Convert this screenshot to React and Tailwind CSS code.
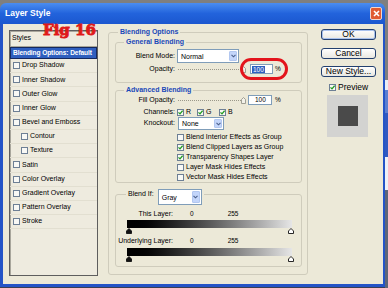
import React from "react"

const STYLES = [
  ["Drop Shadow"],
  ["Inner Shadow"],
  ["Outer Glow"],
  ["Inner Glow"],
  ["Bevel and Emboss"],
  ["Contour", true],
  ["Texture", true],
  ["Satin"],
  ["Color Overlay"],
  ["Gradient Overlay"],
  ["Pattern Overlay"],
  ["Stroke"],
]

const OPTIONS = [
  ["Blend Interior Effects as Group", false],
  ["Blend Clipped Layers as Group", true],
  ["Transparency Shapes Layer", true],
  ["Layer Mask Hides Effects", false],
  ["Vector Mask Hides Effects", false],
]

// small xp checkbox
function Box({ on }) {
  return (
    <span className="flex h-[7px] w-[7px] shrink-0 items-center justify-center border border-[#6d7f95] bg-[#f8f8f5]">
      {on && (
        <svg width="5" height="5" viewBox="0 0 5 5">
          <path d="M0.5 2.4 L2 3.9 L4.6 0.7" fill="none" stroke="#1f9a1f" strokeWidth="1.3" />
        </svg>
      )}
    </span>
  )
}

function Drop({ value, className }) {
  return (
    <div className={`flex items-stretch border border-[#7f9db9] bg-white ${className}`}>
      <span className="flex flex-1 items-center pl-[3px] text-[7px] leading-none">{value}</span>
      <span className="m-px flex w-[8px] items-center justify-center rounded-[1px] border border-[#b2c7f0] bg-[#c3d5fa]">
        <svg width="5" height="4" viewBox="0 0 5 4">
          <path d="M0.5 0.8 L2.5 2.8 L4.5 0.8" fill="none" stroke="#4a5f8a" strokeWidth="1.1" />
        </svg>
      </span>
    </div>
  )
}

function Slider() {
  return (
    <div className="flex w-[68px] items-center">
      <div className="h-0 flex-1 border-t border-dotted border-[#9a988a]" />
      <svg width="5" height="7" viewBox="0 0 5 7">
        <path d="M0.5 2.5 L2.5 0.5 L4.5 2.5 V6.5 H0.5Z" fill="#f3f2ea" stroke="#8b8a80" strokeWidth="0.8" />
      </svg>
    </div>
  )
}

function Thumb({ dark }) {
  return (
    <svg width="6" height="6" viewBox="0 0 6 6">
      <path d="M3 0.5 L5.5 3 V5.5 H0.5 V3Z" fill={dark ? "#111" : "#fff"} stroke="#111" strokeWidth="0.9" />
    </svg>
  )
}

function Btn({ children, def }) {
  return (
    <div
      className={`flex h-[11px] w-[55px] items-center justify-center rounded-[3px] border border-[#23406f] bg-linear-to-b from-white to-[#e9e8e1] text-[8.5px] leading-none ${
        def ? "shadow-[inset_0_0_0_1px_#a9c2ee]" : ""
      }`}
    >
      {children}
    </div>
  )
}

export default function App() {
  return (
    <div className="relative flex h-[288px] w-[388px] overflow-hidden bg-[#7f7f7f] font-['Liberation_Sans',Arial,sans-serif] text-black">
      {/* WINDOW */}
      <div className="flex w-[385px] flex-col pt-[3px]">
        {/* TITLE BAR */}
        <div className="flex h-[21px] items-center justify-between rounded-t-[6px] bg-linear-to-b from-[#4b8df0] via-[#2263dc] to-[#1b57cf] pl-[5px] pr-[3px]">
          <span className="text-[8.5px] font-bold text-white">Layer Style</span>
          <span className="flex h-[13px] w-[12px] items-center justify-center rounded-[2px] border border-[#f2d6cc] bg-[#e05a31]">
            <svg width="7" height="7" viewBox="0 0 7 7">
              <path d="M1 1 L6 6 M6 1 L1 6" stroke="white" strokeWidth="1.6" />
            </svg>
          </span>
        </div>

        {/* BODY */}
        <div className="flex h-[263px] border-b-[3px] border-l-[3px] border-r-[2px] border-[#2454c7]">
          <div className="flex flex-1 items-start bg-[#ece9d8] pl-[6px]">
            {/* STYLES LIST */}
            <div className="mt-[6px] flex h-[246px] w-[89px] flex-col border border-[#5e5e5e] bg-[#eeebdf] shadow-[inset_1px_1px_0_#a8a69c]">
              <div className="flex h-[16px] items-center border-b border-[#a9a698] pl-[2px] text-[7px]">Styles</div>
              <div className="flex h-[12px] items-center overflow-hidden whitespace-nowrap border border-[#15285e] bg-[#2f5fbf] pl-[2px] text-[6.6px] font-bold tracking-[-0.1px] text-white">
                Blending Options: Default
              </div>
              {STYLES.map(([name, sub]) => (
                <div
                  key={name}
                  className={`flex h-[14.2px] items-center gap-[2px] border-b border-[#e2dfd1] text-[7px] ${sub ? "pl-[11px]" : "pl-[3px]"}`}
                >
                  <Box />
                  <span>{name}</span>
                </div>
              ))}
            </div>

            {/* BLENDING OPTIONS */}
            <fieldset className="ml-[10px] mt-[4px] flex h-[247px] w-[200px] flex-col rounded-[3px] border border-[#cfccbc] pl-[6px] pr-[5px]">
              <legend className="ml-[3px] px-[2px] text-[7px] font-bold leading-[8px] text-[#1a48b8]">Blending Options</legend>

              {/* GENERAL */}
              <fieldset className="mt-[2px] h-[45px] rounded-[3px] border border-[#cfccbc]">
                <legend className="ml-[8px] px-[2px] text-[7px] font-bold leading-[8px] text-[#1a48b8]">General Blending</legend>
                <div className="mt-[3px] flex h-[14px] items-center">
                  <span className="w-[59px] text-right text-[7px]">Blend Mode:</span>
                  <Drop value="Normal" className="ml-[2px] h-[14px] w-[62px]" />
                </div>
                <div className="mt-px flex h-[10px] items-center">
                  <span className="w-[59px] text-right text-[7px]">Opacity:</span>
                  <div className="ml-[3px]">
                    <Slider />
                  </div>
                  <div className="ml-[4px] flex h-[10px] w-[23px] items-center border border-[#7f9db9] bg-white pl-px">
                    <span className="bg-[#2f5fbf] px-px text-[6.5px] leading-[7px] text-white">100</span>
                  </div>
                  <span className="ml-[2px] text-[6.5px]">%</span>
                </div>
              </fieldset>

              {/* ADVANCED */}
              <fieldset className="mt-[3px] rounded-[3px] border border-[#cfccbc]">
                <legend className="ml-[8px] px-[2px] text-[7px] font-bold leading-[8px] text-[#1a48b8]">Advanced Blending</legend>
                <div className="mt-px flex h-[10px] items-center">
                  <span className="w-[59px] text-right text-[7px]">Fill Opacity:</span>
                  <div className="ml-[3px]">
                    <Slider />
                  </div>
                  <div className="ml-[2px] flex h-[10px] w-[24px] items-center border border-[#7f9db9] bg-white pl-[6px] text-[6.5px]">100</div>
                  <span className="ml-[3px] text-[6.5px]">%</span>
                </div>
                <div className="mt-[2px] flex h-[10px] items-center text-[7px]">
                  <span className="w-[59px] text-right">Channels:</span>
                  <div className="ml-[2px] flex w-[20px] items-center gap-[2px]">
                    <Box on />
                    <span>R</span>
                  </div>
                  <div className="flex w-[22px] items-center gap-[2px]">
                    <Box on />
                    <span>G</span>
                  </div>
                  <div className="flex items-center gap-[2px]">
                    <Box on />
                    <span>B</span>
                  </div>
                </div>
                <div className="flex h-[13px] items-center">
                  <span className="w-[59px] text-right text-[7px]">Knockout:</span>
                  <Drop value="None" className="ml-[3px] h-[13px] w-[46px]" />
                </div>
                <div className="mt-[2px] flex flex-col">
                  {OPTIONS.map(([label, on]) => (
                    <div key={label} className="flex h-[10px] items-center gap-[2px] pl-[61px] text-[7px]">
                      <Box on={on} />
                      <span className="whitespace-nowrap">{label}</span>
                    </div>
                  ))}
                </div>
              </fieldset>

              {/* BLEND IF */}
              <fieldset className="mt-[6px] h-[78px] rounded-[3px] border border-[#cfccbc]">
                <legend className="ml-[10px] flex h-[10px] items-start gap-[4px] px-[2px]">
                  <span className="text-[7px] leading-[10px]">Blend If:</span>
                  <Drop value="Gray" className="h-[16px] w-[44px]" />
                </legend>
                <div className="mt-[10px] flex h-[10px] items-center text-[6.5px]">
                  <span className="w-[57px] text-right text-[7px]">This Layer:</span>
                  <span className="ml-[17px]">0</span>
                  <span className="ml-[34px]">255</span>
                </div>
                <div className="ml-[11px] mt-px h-[8px] w-[165px] bg-linear-to-r from-black to-[#e6e6e6]" />
                <div className="ml-[10px] flex h-[6px] w-[168px] justify-between">
                  <Thumb dark />
                  <Thumb />
                </div>
                <div className="mt-[2px] flex h-[10px] items-center text-[6.5px]">
                  <span className="w-[57px] text-right text-[7px]">Underlying Layer:</span>
                  <span className="ml-[17px]">0</span>
                  <span className="ml-[34px]">255</span>
                </div>
                <div className="ml-[11px] mt-[2px] h-[8px] w-[165px] bg-linear-to-r from-black to-[#e6e6e6]" />
                <div className="ml-[10px] flex h-[6px] w-[168px] justify-between">
                  <Thumb dark />
                  <Thumb />
                </div>
              </fieldset>
            </fieldset>

            {/* BUTTONS */}
            <div className="ml-[13px] mt-[5px] flex flex-col">
              <Btn def>OK</Btn>
              <div className="mt-[8px]">
                <Btn>Cancel</Btn>
              </div>
              <div className="mt-[7px]">
                <Btn>New Style...</Btn>
              </div>
              <div className="ml-[8px] mt-[6px] flex h-[8px] items-center gap-[2px] text-[8.5px]">
                <Box on />
                <span>Preview</span>
              </div>
              <div className="ml-[6px] mt-[4px] flex h-[42px] w-[41px] items-center justify-center bg-[#d3d3d1]">
                <div className="h-[20px] w-[20px] bg-[#4a4a4a]" />
              </div>
            </div>
          </div>
        </div>
        <div className="h-px bg-[#3b3f52]" />
      </div>

      {/* BEHIND WINDOW */}
      <div className="flex w-[3px] flex-col">
        <div className="h-[80px] bg-[#7f7f7f]" />
        <div className="h-[10px] bg-[#e8ecf4]" />
        <div className="h-[23px] bg-[#5b7fd0]" />
        <div className="h-[44px] bg-[#3059c0]" />
        <div className="h-[33px] bg-[#eef1f8]" />
        <div className="flex-1 bg-[#5d6679]" />
      </div>

      {/* ANNOTATIONS */}
      <span className="absolute left-[43px] top-[23px] font-['DejaVu_Serif',serif] text-[15px] font-bold leading-none text-[#df1a1a] [-webkit-text-stroke:0.9px_#df1a1a]">
        Fig 16
      </span>
      <span className="absolute left-[240px] top-[58px] h-[22px] w-[48px] rounded-[11px] border-[3px] border-[#e3141c]" />
    </div>
  )
}
